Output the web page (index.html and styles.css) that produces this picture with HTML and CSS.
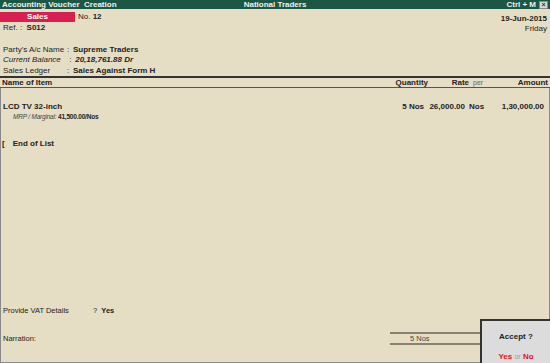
FILE: index.html
```html
<!DOCTYPE html>
<html lang="en">
<head>
    <meta charset="UTF-8">
    <title>Accounting Voucher Creation</title>
    <link rel="stylesheet" href="styles.css">
</head>
<body>
    <div class="window">
        <!-- Title bar -->
        <div class="titlebar">
            <span class="title-left">Accounting Voucher&nbsp; Creation</span>
            <span class="title-center">National Traders</span>
            <span class="title-right">Ctrl + M <span class="close-box">&times;</span></span>
        </div>

        <!-- Voucher type, number, ref and date -->
        <div class="voucher-head">
            <div>
                <div class="voucher-type">
                    <span class="badge">Sales</span>
                    <span>No. <b>12</b></span>
                </div>
                <div class="ref">Ref. : &nbsp;<b>S012</b></div>
            </div>
            <div class="voucher-date">
                <b>19-Jun-2015</b>
                <span>Friday</span>
            </div>
        </div>

        <!-- Party details -->
        <div class="party">
            <span>Party's A/c Name</span><span>:</span><b>Supreme Traders</b>
            <i>Current Balance</i><span>&nbsp;:</span><b class="italic">&nbsp;20,18,761.88 Dr</b>
            <span>Sales Ledger</span><span>:</span><b>Sales Against Form H</b>
        </div>

        <!-- Item table header -->
        <div class="item-head">
            <span class="col-name">Name of Item</span>
            <span class="col-qty">Quantity</span>
            <span class="col-rate">Rate</span>
            <span class="col-per light">per</span>
            <span class="col-amt">Amount</span>
        </div>

        <!-- Item lines -->
        <div class="items">
            <div class="item-row">
                <span class="col-name">LCD TV 32-inch</span>
                <span class="col-qty">5 Nos</span>
                <span class="col-rate">26,000.00</span>
                <span class="col-per">Nos</span>
                <span class="col-amt">1,30,000.00</span>
            </div>
            <div class="mrp"><i>MRP / Marginal:</i> <b>41,500.00/Nos</b></div>

            <div class="end-list"><b>[</b><b class="end-text">End of List</b></div>

            <div class="spacer"></div>

            <div class="vat">
                <span class="vat-label">Provide VAT Details</span>
                <span>? &nbsp;<b>Yes</b></span>
            </div>

            <div class="narration">
                <span class="narr-label">Narration:</span>
                <span class="narr-total">5 Nos</span>
            </div>
        </div>

        <!-- Accept dialog -->
        <div class="accept">
            <b>Accept ?</b>
            <div class="accept-opts"><b class="red">Yes</b> <span class="or">or</span> <b class="red">No</b></div>
        </div>
    </div>
</body>
</html>
```

FILE: styles.css
```css
/* Base page */
body {
    margin: 0;
    font-family: 'Liberation Sans', Arial, sans-serif;
    font-size: 8px;
    line-height: 10px;
    color: #222;
    background: #e6dec4;
}

.window {
    position: relative;
    display: flex;
    flex-direction: column;
    width: 550px;
    height: 363px;
    overflow: hidden;
}

/* Title bar */
.titlebar {
    display: flex;
    align-items: center;
    justify-content: space-between;
    height: 9px;
    padding: 0 2px;
    background: #1c5746;
    color: #eef2ee;
    font-weight: bold;
    font-size: 8px;
    position: relative;
}
.title-center {
    position: absolute;
    left: 0;
    right: 0;
    text-align: center;
}
.title-right {
    display: flex;
    align-items: center;
    gap: 3px;
}
.close-box {
    display: inline-flex;
    align-items: center;
    justify-content: center;
    width: 7px;
    height: 6px;
    background: #d8d8d8;
    color: #333;
    font-size: 7px;
    line-height: 6px;
    border: 1px solid #888;
}

/* Voucher head */
.voucher-head {
    display: flex;
    justify-content: space-between;
    padding-top: 3px;
    height: 33px;
}
.voucher-type {
    display: flex;
    align-items: center;
    gap: 3px;
}
.badge {
    width: 75px;
    height: 10px;
    background: #d81f50;
    color: #fff;
    font-weight: bold;
    text-align: center;
}
.ref {
    padding: 1px 0 0 3px;
}
.voucher-date {
    display: flex;
    flex-direction: column;
    align-items: flex-end;
    padding: 2px 3px 0 0;
}

/* Party details */
.party {
    display: grid;
    grid-template-columns: 64px 6px auto;
    padding-left: 3px;
    height: 31px;
}
.italic {
    font-style: italic;
}

/* Table header */
.item-head,
.item-row {
    display: flex;
    align-items: center;
}
.item-head {
    height: 9px;
    border-top: 2px solid #333;
    border-bottom: 1px solid #555;
    font-weight: bold;
}
.col-name {
    flex: 1;
    padding-left: 2px;
}
.col-qty {
    width: 40px;
    text-align: right;
}
.col-rate {
    width: 41px;
    text-align: right;
}
.col-per {
    width: 30px;
    padding-left: 4px;
}
.col-amt {
    width: 45px;
    text-align: right;
    padding-right: 2px;
}
.light {
    font-weight: normal;
    color: #666;
    font-size: 7px;
}

/* Items area */
.items {
    flex: 1;
    display: flex;
    flex-direction: column;
    border-left: 1px solid #8a8a8a;
    border-right: 1px solid #8a8a8a;
    border-bottom: 1px solid #8a8a8a;
}
.item-row {
    margin-top: 14px;
    font-weight: bold;
}
.item-row .col-amt {
    padding-right: 5px;
}
.mrp {
    padding-left: 12px;
    font-size: 6.5px;
    letter-spacing: -0.2px;
}
.mrp i {
    color: #444;
}
.end-list {
    margin-top: 17px;
    padding-left: 1px;
}
.end-text {
    padding-left: 8px;
}
.spacer {
    flex: 1;
}
.vat {
    display: flex;
    padding-left: 2px;
    font-size: 7.5px;
}
.vat-label {
    width: 90px;
}
.narration {
    display: flex;
    align-items: center;
    margin: 16px 0 17px;
    font-size: 7.5px;
}
.narr-label {
    width: 387px;
    padding-left: 2px;
}
.narr-total {
    width: 70px;
    height: 9px;
    padding-left: 20px;
    border-top: 2px solid #8a8270;
    border-bottom: 2px solid #8a8270;
    color: #444;
}

/* Accept box overlays the bottom right corner */
.accept {
    position: absolute;
    right: 0;
    bottom: 0;
    width: 70px;
    height: 44px;
    background: #dcdcdc;
    border: 2px solid #333;
    border-right: none;
    border-bottom: none;
    display: flex;
    flex-direction: column;
    align-items: center;
    justify-content: space-between;
    padding: 11px 0 1px;
    box-sizing: border-box;
}
.accept-opts {
    font-size: 8px;
}
.red {
    color: #e8101a;
}
.or {
    color: #999;
    font-size: 7px;
}
```
